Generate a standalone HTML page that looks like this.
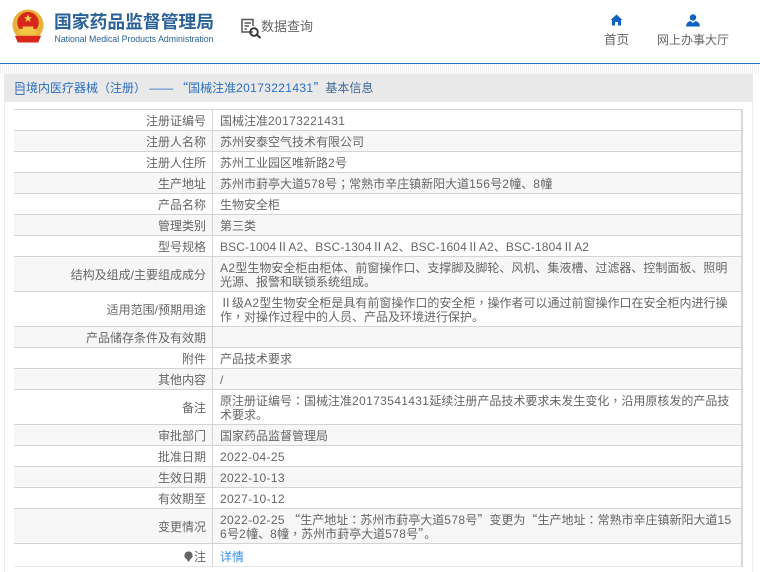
<!DOCTYPE html>
<html><head><meta charset="utf-8"><title>国家药品监督管理局</title>
<style>
*{box-sizing:border-box}
html,body{margin:0;padding:0}
body{width:760px;height:572px;overflow:hidden;position:relative;background:#fff;font-family:"Liberation Sans","Noto Sans CJK SC",sans-serif;font-size:12px;color:#666}
.a{position:absolute;white-space:nowrap}
.dots{position:absolute;left:0;top:64px;width:760px;height:10px;background-image:repeating-linear-gradient(90deg,#e6e6e6 0 1px,#fff 1px 2px);opacity:.6}
table{position:absolute;left:14px;top:109px;width:729px;border-collapse:collapse;table-layout:fixed;border-right:2px solid #d8d8e0}
td{padding:1px 0 0 7px;border-top:1.5px solid #d4d4d4;line-height:14px;vertical-align:middle;color:#666;font-size:12px;white-space:nowrap}
td:first-child{padding:1px 6px 0 0;text-align:right;border-right:1.5px solid #d4d4d4;width:198.5px}
tr:nth-child(even) td{background:#f7f7f7}
i{font-style:normal;letter-spacing:.35px}
.m i{letter-spacing:.12px}
u{text-decoration:none;font-family:"Noto Sans CJK TC",sans-serif}
b{font-weight:400;font-family:"Noto Sans CJK SC",sans-serif}
</style></head><body>
<svg class="a" style="left:11px;top:8px" width="34" height="36" viewBox="0 0 35 36">
<circle cx="17.5" cy="17" r="16" fill="#e8b23a"/><circle cx="17.5" cy="14.5" r="11" fill="#d8261c"/>
<path d="M17.5 6l1.2 3h3l-2.4 1.9.9 3-2.7-1.8-2.7 1.8.9-3L13.300 9h3z" fill="#f5d04a"/>
<rect x="9" y="21" width="17" height="5" fill="#f3c646"/><rect x="12" y="18.500" width="11" height="3" fill="#f3c646"/>
<path d="M4 28h27l-3 7H7z" fill="#d8261c"/><rect x="8" y="26" width="19" height="2" fill="#efbe3f"/>
</svg>
<div class="a" style="left:54px;top:9px;font-size:17.800px;line-height:26px;font-weight:700;color:#2a6198">国家药品监督管理局</div>
<div class="a" style="left:54.500px;top:33px;font-size:8.750px;line-height:13px;color:#2a6198">National Medical Products Administration</div>
<svg class="a" style="left:240px;top:18px" width="22" height="21" viewBox="0 0 22 21" fill="none" stroke="#555" stroke-width="1.500">
<path d="M13 14H2V1.500h11V8"/><path d="M4.500 5H11M4.500 8H9M4.500 11H7"/><circle cx="14" cy="14" r="3.800" stroke="#333" stroke-width="1.800"/><path d="M17 17l3.500 3" stroke="#333" stroke-width="2"/>
</svg>
<div class="a" style="left:261px;top:17px;font-size:13px;line-height:20px;color:#666">数据查询</div>
<svg class="a" style="left:610px;top:14px" width="13" height="12" viewBox="0 0 13 12"><path d="M6.500.500L12.500 6H11v5.500H8V8H5v3.500H2V6H.500z" fill="#0e62c0"/></svg>
<div class="a" style="left:604px;top:31px;font-size:12.500px;line-height:18px;color:#666">首页</div>
<svg class="a" style="left:686px;top:14px" width="14" height="13" viewBox="0 0 14 13"><circle cx="7" cy="3.500" r="3.200" fill="#0e62c0"/><path d="M0 12.500c.5-4 2.500-5 4.500-5.500L7 9l2.500-2c2 .5 4 1.500 4.500 5.500z" fill="#0e62c0"/></svg>
<div class="a" style="left:657px;top:31px;font-size:12px;line-height:18px;color:#666">网上办事大厅</div>
<div class="a" style="left:0;top:63px;width:760px;height:1px;background:#2272c4"></div>
<div class="dots"></div>
<div class="a" style="left:4px;top:74px;width:749px;height:498px;background:#fff;border-right:1px solid #eee;border-left:1px solid #eee"></div>
<div class="a" style="left:4px;top:74px;width:749px;height:27.500px;background:#e9e9e9"></div>
<svg class="a" style="left:15px;top:82px" width="10" height="13" viewBox="0 0 10 13" fill="none" stroke="#3a76c4"><path d="M1 .500h6l2 2v10H1zM1 5h8M1 8h8M3 3h3"/></svg>
<div class="a" style="left:26px;top:80px;line-height:16px;color:#2a6fc0">境内医疗器械<b>（</b>注册<b>）</b> <span style="margin-right:2.700px">——</span><b>“</b>国械注准<i>20173221431</i><b>”</b><span style="color:#3d6a96">基本信息</span></div>
<table>
<tr style="height:21px"><td>注册证编号</td><td>国械注准<i>20173221431</i></td></tr>
<tr style="height:21px"><td>注册人名称</td><td>苏州安泰空气技术有限公司</td></tr>
<tr style="height:21px"><td>注册人住所</td><td>苏州工业园区唯新路<i>2</i>号</td></tr>
<tr style="height:21px"><td>生产地址</td><td>苏州市葑亭大道<i>578</i>号<u>；</u>常熟市辛庄镇新阳大道<i>156</i>号<i>2</i>幢、<i>8</i>幢</td></tr>
<tr style="height:21px"><td>产品名称</td><td>生物安全柜</td></tr>
<tr style="height:21px"><td>管理类别</td><td>第三类</td></tr>
<tr style="height:21px" class="m"><td>型号规格</td><td><i>BSC-1004</i><b>Ⅱ</b><i>A2</i>、<i>BSC-1304</i><b>Ⅱ</b><i>A2</i>、<i>BSC-1604</i><b>Ⅱ</b><i>A2</i>、<i>BSC-1804</i><b>Ⅱ</b><i>A2</i></td></tr>
<tr style="height:35px"><td>结构及组成/主要组成成分</td><td><i>A2</i>型生物安全柜由柜体、前窗操作口、支撑脚及脚轮、风机、集液槽、过滤器、控制面板、照明<br>光源、报警和联锁系统组成。</td></tr>
<tr style="height:35px"><td>适用范围/预期用途</td><td><b>Ⅱ</b>级<i>A2</i>型生物安全柜是具有前窗操作口的安全柜<u>，</u>操作者可以通过前窗操作口在安全柜内进行操<br>作<u>，</u>对操作过程中的人员、产品及环境进行保护。</td></tr>
<tr style="height:21px"><td>产品储存条件及有效期</td><td></td></tr>
<tr style="height:21px"><td>附件</td><td>产品技术要求</td></tr>
<tr style="height:21px"><td>其他内容</td><td>/</td></tr>
<tr style="height:35px"><td>备注</td><td>原注册证编号<u>：</u>国械注准<i>20173541431</i>延续注册产品技术要求未发生变化<u>，</u>沿用原核发的产品技<br>术要求。</td></tr>
<tr style="height:21px"><td>审批部门</td><td>国家药品监督管理局</td></tr>
<tr style="height:21px"><td>批准日期</td><td><i>2022-04-25</i></td></tr>
<tr style="height:21px"><td>生效日期</td><td><i>2022-10-13</i></td></tr>
<tr style="height:21px"><td>有效期至</td><td><i>2027-10-12</i></td></tr>
<tr style="height:35px"><td>变更情况</td><td><i>2022-02-25</i> <b>“</b>生产地址<u>：</u>苏州市葑亭大道<i>578</i>号<b>”</b>变更为<b>“</b>生产地址<u>：</u>常熟市辛庄镇新阳大道<i>15</i><br><i>6</i>号<i>2</i>幢、<i>8</i>幢<u>，</u>苏州市葑亭大道<i>578</i>号<b>”</b>。</td></tr>
<tr style="height:23px"><td style="padding-top:3px"><svg width="9" height="11" viewBox="0 0 9 11" style="vertical-align:-1px;margin-right:1px"><path d="M4.500.500a4 4 0 0 1 2 7.500L5 10.500H4L2.500 8a4 4 0 0 1 2-7.500z" fill="#666"/></svg>注</td><td style="color:#3d8ee8;padding-top:4px">详情</td></tr>
</table>
<div class="a" style="left:14px;top:566px;width:727px;height:1px;background:#e6e9f2"></div>
</body></html>
